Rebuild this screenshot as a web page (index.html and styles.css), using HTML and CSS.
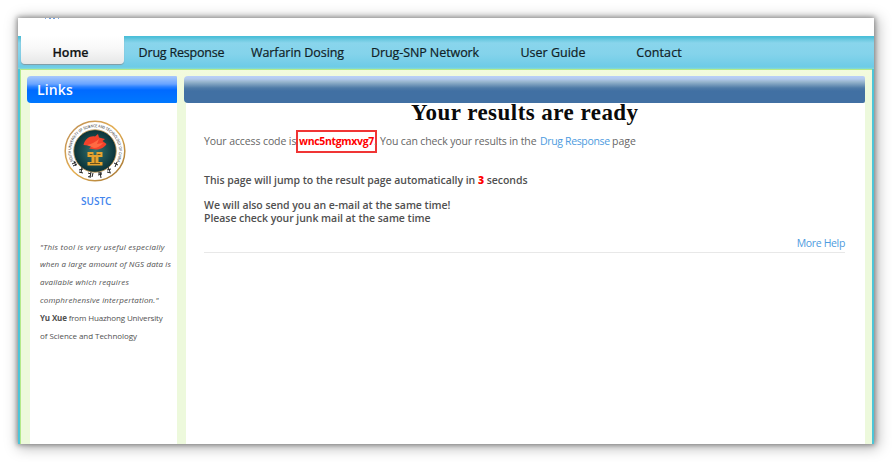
FILE: index.html
```html
<!DOCTYPE html>
<html lang="en">
<head>
<meta charset="utf-8">
<title>Your results are ready</title>
<link rel="stylesheet" href="styles.css">
</head>
<body>
<div class="window">
  <header class="top"><svg class="speck" width="20" height="2" viewBox="0 0 20 2"><path d="M2 .4h1M6 .5h2M10 .5h2M15 .4h1" stroke="#6d9de0" stroke-width="1"/></svg></header>
  <nav class="nav">
    <a class="tab active">Home</a>
    <a class="tab response">Drug Response</a>
    <a class="tab warfarin">Warfarin Dosing</a>
    <a class="tab network">Drug-SNP Network</a>
    <a class="tab guide">User Guide</a>
    <a class="tab contact">Contact</a>
  </nav>
  <div class="frame">
    <aside class="side">
      <h2 class="bar bar-links">Links</h2>
      <div class="panel side-panel">
        <svg class="seal" viewBox="0 0 62 62">
          <defs>
            <linearGradient id="rim" x1="0" y1="0" x2="1" y2="1"><stop offset="0" stop-color="#b98a54"/><stop offset=".5" stop-color="#e6b052"/><stop offset="1" stop-color="#9a6c2e"/></linearGradient>
            <radialGradient id="disc"><stop offset="0" stop-color="#33736f"/><stop offset="1" stop-color="#0b3238"/></radialGradient>
            <path id="arc" d="M9.200 41.200A24 24 0 1 1 52.800 41.200"/>
          </defs>
          <circle cx="31" cy="31" r="29.8" fill="#fff" stroke="url(#rim)" stroke-width="1.5"/>
          <circle cx="31" cy="31" r="21.3" fill="url(#disc)" stroke="#c99d58" stroke-width=".8"/>
          <text class="seal-text" textLength="96" lengthAdjust="spacingAndGlyphs"><textPath href="#arc">SOUTH UNIVERSITY OF SCIENCE AND TECHNOLOGY OF CHINA</textPath></text>
          <path d="M19.500 25C21 19 26 15.500 31 16.500L34 14L35 17.500L41 19L38.500 21L42.500 24C40 28 36 29.500 32 29.500L25 28.500L28 26Z" fill="#f3422b"/>
          <path d="M23 25q6-1 12-6l-2 5 6-1q-4 5-9 5" fill="#ff6a43"/>
          <path d="M23.500 32h6v3h3v-3h6v5h-4v5h4v3.500h-15v-3.500h4v-5h-4z" fill="#e8a42f"/>
          <path d="M25.500 34.500h3M33.500 34.500h3M31 37v6M26 43.500h10" fill="none" stroke="#5b4a1c" stroke-width=".9"/>
          <g fill="none" stroke="#222" stroke-width="1">
            <path d="M8 44l4-2m-2-1 2 5m-3 0 4-2"/><path d="M15 50l4-1m-1-2-1 6m-2-1 4 1"/><path d="M24 53l3 1m0-2-1 6m-2-1 2-1m3-3-1 4"/><path d="M34 53l4 0m-2-1 1 6m-3-3 4-1"/><path d="M43 50l4-1m-3-2 2 5m-3 0 4 1"/><path d="M50 43l4 2m-1-3-2 5"/>
          </g>
        </svg>
        <a class="sustc">SUSTC</a>
        <div class="quote">
          <i class="q1">"This tool is very useful especially</i>
          <i class="q2">when a large amount of NGS data is</i>
          <i class="q3">available which requires</i>
          <i class="q4">comphrehensive interpertation."</i>
          <span class="q5"><b>Yu Xue</b> from Huazhong University</span>
          <span class="q6">of Science and Technology</span>
        </div>
      </div>
    </aside>
    <main class="main">
      <div class="bar bar-main"></div>
      <div class="panel content">
        <h1 class="title">Your results are ready</h1>
        <p class="access"><span class="a1">Your access code is</span><b class="code">wnc5ntgmxvg7<span class="dot">.</span></b><span class="a2">You can check your results in the</span><a class="link">Drug Response</a><span class="a3">page</span></p>
        <p class="jump">This page will jump to the result page automatically in <b class="red">3</b> seconds</p>
        <p class="mail"><span class="m1">We will also send you an e-mail at the same time!</span><span class="m2">Please check your junk mail at the same time</span></p>
        <div class="more"><a class="help">More Help</a></div>
      </div>
    </main>
  </div>
</div>
</body>
</html>
```

FILE: styles.css
```css
* { box-sizing: border-box; }
body { margin: 0; background: #fff; padding: 18px; font-family: "Open Sans", "Noto Sans", sans-serif; overflow: hidden; }
h1, h2, p { margin: 0; }
.window { width: 856px; height: 426px; background: #fff; box-shadow: 0 0 5px 1px rgba(0,0,0,.38), 2px 2px 13px 2px rgba(0,0,0,.28); overflow: hidden; }
.top { height: 18px; padding-left: 25px; }
.speck { display: block; }
.nav { display: flex; height: 33px; padding-left: 3px; background: linear-gradient(#4bbfd9 0, #4bbfd9 1px, #70cbe2 4px, #89d5ec 7px, #84d3eb 18px, #6dcbe7 31px, #86dcd5 33px); }
.tab { height: 32px; line-height: 34px; text-align: center; white-space: nowrap; font-size: 12.500px; font-weight: 500; color: #102126; -webkit-text-stroke: .2px #102126; }
.active { width: 103px; height: 28px; background: linear-gradient(#fff, #f8f8f8 45%, #e6e7e7); border-radius: 0 0 4px 4px; box-shadow: 0 1px 1px #8199a2; font-weight: 600; color: #111; padding-right: 4px; }
.response { width: 115px; letter-spacing: -.2px; }
.warfarin { width: 117px; letter-spacing: -.06px; }
.network { width: 138px; letter-spacing: -.08px; }
.guide { width: 118px; }
.contact { width: 94px; letter-spacing: .1px; }
.frame { display: flex; height: 375px; padding: 7px 7px 0; background: linear-gradient(#f3fbdd, #edf9dc 30px); border: solid #4cc5d8; border-width: 0 2px; box-shadow: inset 1px 1px #b4e98a; }
.side { width: 150px; margin-right: 7px; }
.main { width: 681px; }
.bar { height: 26.500px; border-radius: 4px; }
.bar-links { padding-left: 10px; line-height: 28px; font-size: 14px; font-weight: 600; letter-spacing: .15px; color: #fff; background: linear-gradient(#a9c9fb, #69a4ff 8px, #2980ff 11px, #006aff 14px, #0078ff); border-radius: 4px 1px 1px 4px; }
.bar-main { background: linear-gradient(#bad0fa 0, #b3caec 3px, #96b4cc 6px, #4f7ba7 12px, #4170a3 15px, #4170a3); border-radius: 4px 2px 2px 4px; }
.panel { height: 341.500px; background: #fff; }
.side-panel { width: 147px; margin-left: 3px; padding: 17.500px 0 0 10px; }
.seal { display: block; width: 62px; height: 62px; margin-left: 24px; }
.seal-text { font: 400 4px "Liberation Sans", sans-serif; fill: #222; }
.sustc { display: block; margin: 12px 0 0 41px; line-height: 14px; font-size: 10px; font-weight: 600; color: #4285ed; }
.quote { margin-top: 29.500px; font-size: 8px; line-height: 17.900px; color: #505050; }
.quote > * { display: block; white-space: nowrap; }
.q1 { letter-spacing: .23px; }
.q2 { letter-spacing: .1px; }
.q3 { letter-spacing: .14px; }
.q4 { letter-spacing: .15px; }
.q5 { letter-spacing: -.15px; }
.q6 { letter-spacing: -.06px; }
.content { width: 679px; margin-left: 2px; padding: .5px 20px 0 18px; font-size: 10.500px; color: #666; }
.title { margin-left: 207px; height: 21px; font: 700 23px/19px "Liberation Serif", serif; letter-spacing: .46px; color: #0a0a0a; white-space: nowrap; }
.access { display: flex; height: 33px; padding-top: 6px; line-height: 22px; white-space: nowrap; }
.a1 { width: 92px; letter-spacing: -.1px; }
.code { width: 81px; height: 23px; margin-right: 3px; border: 2px solid #f03535; line-height: 18px; padding-left: 1px; color: #f00; letter-spacing: -.34px; }
.dot { color: #888; font-weight: 400; }
.a2 { width: 160px; letter-spacing: -.13px; }
.link, .help { color: #4d9be0; }
.link { width: 72px; letter-spacing: -.35px; }
.jump, .mail { font-weight: 600; color: #505050; white-space: nowrap; }
.jump { padding-top: 16px; line-height: 14px; height: 40px; letter-spacing: -.04px; }
.red { color: #f00; }
.mail { line-height: 12.500px; padding-top: 2px; height: 39px; letter-spacing: -.05px; }
.mail span { display: block; }
.more { height: 17px; line-height: 15px; border-bottom: 1px solid #e8e8e8; text-align: right; letter-spacing: -.35px; }
```
